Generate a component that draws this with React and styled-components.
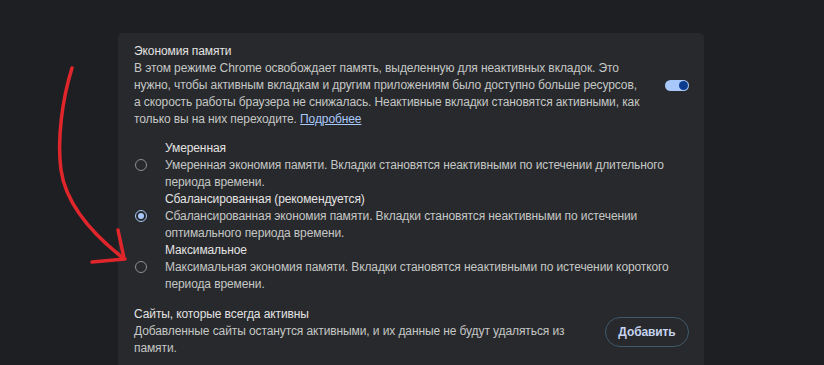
import styled, { createGlobalStyle } from "styled-components";

const GlobalStyle = createGlobalStyle`
  html, body {
    margin: 0;
    background: #1e1f22;
    font-family: "Liberation Sans", Arial, sans-serif;
    overflow: hidden;
  }
`;

const modes = [
  {
    id: "moderate",
    title: "Умеренная",
    lines: [
      "Умеренная экономия памяти. Вкладки становятся неактивными по истечении длительного",
      "периода времени.",
    ],
  },
  {
    id: "balanced",
    title: "Сбалансированная (рекомендуется)",
    lines: [
      "Сбалансированная экономия памяти. Вкладки становятся неактивными по истечении",
      "оптимального периода времени.",
    ],
    checked: true,
  },
  {
    id: "maximum",
    title: "Максимальное",
    lines: [
      "Максимальная экономия памяти. Вкладки становятся неактивными по истечении короткого",
      "периода времени.",
    ],
  },
];

const App = () => {
  return (
    <Page>
      <GlobalStyle />
      <Card>
        <Header>
          <TextBlock>
            <Title>Экономия памяти</Title>
            <Desc>
              В этом режиме Chrome освобождает память, выделенную для неактивных вкладок. Это
              <br />
              нужно, чтобы активным вкладкам и другим приложениям было доступно больше ресурсов,
              <br />
              а скорость работы браузера не снижалась. Неактивные вкладки становятся активными, как
              <br />
              только вы на них переходите. <Link href="#">Подробнее</Link>
            </Desc>
          </TextBlock>
          <Toggle>
            <Knob />
          </Toggle>
        </Header>

        <RadioGroup>
          {modes.map((m) => (
            <RadioRow key={m.id}>
              <Radio $checked={m.checked} />
              <div>
                <Title>{m.title}</Title>
                <Desc>
                  {m.lines[0]}
                  <br />
                  {m.lines[1]}
                </Desc>
              </div>
            </RadioRow>
          ))}
        </RadioGroup>

        <Sites>
          <TextBlock>
            <Title>Сайты, которые всегда активны</Title>
            <Desc>
              Добавленные сайты останутся активными, и их данные не будут удаляться из
              <br />
              памяти.
            </Desc>
          </TextBlock>
          <AddButton>Добавить</AddButton>
        </Sites>
      </Card>

      <Arrow viewBox="0 0 824 365" width="824" height="365">
        <path
          d="M72 68 C 62 100, 57 140, 61 170 C 66 205, 95 236, 123 258"
          fill="none"
          stroke="#e0252b"
          strokeWidth="3.5"
          strokeLinecap="round"
        />
        <path
          d="M92 262 L 125 259 M118 230 L 124 258"
          fill="none"
          stroke="#e0252b"
          strokeWidth="3.5"
          strokeLinecap="round"
        />
      </Arrow>
    </Page>
  );
};

export default App;

const Page = styled.div`
  position: relative;
  width: 824px;
  height: 365px;
  padding: 33px 0 0 118px;
  box-sizing: border-box;
  overflow: hidden;
`;

const Card = styled.div`
  width: 586px;
  height: 340px;
  background: #28292c;
  border-radius: 5px;
  padding: 10px 16px 0 16px;
  box-sizing: border-box;
  color: #c4c7c5;
  font-size: 12px;
  letter-spacing: -0.1px;
  line-height: 17px;
`;

const Header = styled.div`
  display: flex;
  align-items: center;
  justify-content: space-between;
`;

const TextBlock = styled.div`
  flex: 1;
  min-width: 0;
`;

const Title = styled.div`
  color: #e3e3e3;
`;

const Desc = styled.div`
  color: #c4c7c5;
  white-space: nowrap;
`;

const Link = styled.a`
  color: #a8c7fa;
  text-decoration: underline;
`;

const Toggle = styled.div`
  flex-shrink: 0;
  width: 24px;
  height: 11px;
  box-sizing: border-box;
  border-radius: 6px;
  background: #a8c7fa;
  display: flex;
  align-items: center;
  justify-content: flex-end;
  padding: 0 1px;
  margin-right: -1px;
`;

const Knob = styled.div`
  width: 9px;
  height: 9px;
  border-radius: 50%;
  background: #0b3b8c;
`;

const RadioGroup = styled.div`
  display: flex;
  flex-direction: column;
  margin-top: 12px;
`;

const RadioRow = styled.div`
  display: flex;
  align-items: flex-start;
`;

const Radio = styled.div`
  flex-shrink: 0;
  width: 12px;
  height: 12px;
  box-sizing: border-box;
  border-radius: 50%;
  border: 1.5px solid ${(p) => (p.$checked ? "#a8c7fa" : "#8e918f")};
  margin: 19px 18px 0 1px;
  display: flex;
  align-items: center;
  justify-content: center;
  &::after {
    content: "";
    width: 6px;
    height: 6px;
    border-radius: 50%;
    background: ${(p) => (p.$checked ? "#a8c7fa" : "transparent")};
  }
`;

const Sites = styled.div`
  display: flex;
  align-items: center;
  justify-content: space-between;
  margin-top: 13px;
`;

const AddButton = styled.button`
  flex-shrink: 0;
  width: 84px;
  height: 30px;
  border-radius: 15px;
  border: 1px solid #3f5a6b;
  background: transparent;
  color: #c5d3f0;
  font-family: inherit;
  font-size: 12px;
  font-weight: 700;
  letter-spacing: -0.1px;
  margin-right: -1px;
`;

const Arrow = styled.svg`
  position: absolute;
  left: 0;
  top: 0;
  pointer-events: none;
`;
